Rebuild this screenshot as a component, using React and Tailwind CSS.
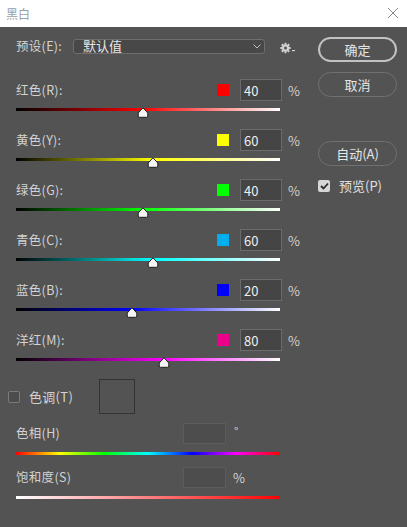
import React from "react";

const rows = [
  { label: "红色(R):", swatch: "bg-[#ff0000]", value: 40, grad: "bg-[linear-gradient(to_right,#000,#ff0000_48%,#fff)]" },
  { label: "黄色(Y):", swatch: "bg-[#ffff00]", value: 60, grad: "bg-[linear-gradient(to_right,#000,#ffff00_52%,#fff)]" },
  { label: "绿色(G):", swatch: "bg-[#00ff00]", value: 40, grad: "bg-[linear-gradient(to_right,#000,#00ff00_48%,#fff)]" },
  { label: "青色(C):", swatch: "bg-[#00aeef]", value: 60, grad: "bg-[linear-gradient(to_right,#000,#00ffff_52%,#fff)]" },
  { label: "蓝色(B):", swatch: "bg-[#0000ff]", value: 20, grad: "bg-[linear-gradient(to_right,#000,#0000ff_44%,#fff)]" },
  { label: "洋红(M):", swatch: "bg-[#ec008c]", value: 80, grad: "bg-[linear-gradient(to_right,#000,#ff00ff_56%,#fff)]" },
];

function Thumb({ left }) {
  return (
    <svg
      className="absolute top-[-1px]"
      style={{ left: left - 6 }}
      width="12"
      height="11"
      viewBox="0 0 12 11"
    >
      <path
        d="M6 0.8 L10.8 6 L10.8 9 Q10.8 10.3 9.5 10.3 L2.5 10.3 Q1.2 10.3 1.2 9 L1.2 6 Z"
        fill="#f4f4f4"
        stroke="#1e1e1e"
        strokeWidth="1"
      />
    </svg>
  );
}

function SliderRow({ label, swatch, value, grad }) {
  const pos = Math.round(((value + 200) / 500) * 264);
  return (
    <div className="h-[50px]">
      <div className="flex h-[22px] items-center">
        <span className="w-[201px] text-[12.5px] leading-none tracking-[0.3px]">{label}</span>
        <span className={`h-3 w-3 ${swatch}`} />
        <div className="ml-[11px] flex h-[22px] w-[42px] items-center border border-[#6b6b6b] bg-[#454545] pl-[3px] text-[13px] leading-none text-[#eeeeee]">
          {value}
        </div>
        <span className="ml-[6px] text-[13px] leading-none">%</span>
      </div>
      <div className={`relative mt-[7px] h-[3px] w-[264px] ${grad}`}>
        <Thumb left={pos} />
      </div>
    </div>
  );
}

function Gear() {
  return (
    <svg width="16" height="12" viewBox="0 0 16 12">
      <g fill="#d0d0d0">
        <circle cx="5.5" cy="6" r="3.6" />
        <rect x="4.5" y="0.8" width="2" height="10.4" />
        <rect x="0.3" y="5" width="10.4" height="2" />
        <rect x="4.5" y="0.8" width="2" height="10.4" transform="rotate(45 5.5 6)" />
        <rect x="4.5" y="0.8" width="2" height="10.4" transform="rotate(-45 5.5 6)" />
      </g>
      <circle cx="5.5" cy="6" r="1.5" fill="#535353" />
      <rect x="12" y="8" width="3" height="1.2" fill="#d0d0d0" />
    </svg>
  );
}

export default function App() {
  return (
    <div className="h-[527px] w-[407px] overflow-hidden bg-[#535353] font-[family-name:'Noto_Sans_CJK_SC',sans-serif] text-[#d2d2d2]">
      {/* Title bar */}
      <div className="flex h-[27px] items-center justify-between bg-white pl-[6px] pr-[8px]">
        <span className="text-[12px] leading-none text-[#9aa0a8]">黑白</span>
        <svg width="12" height="12" viewBox="0 0 12 12" className="mt-[-2px]">
          <path d="M1 1 L11 11 M11 1 L1 11" stroke="#8a8a8a" strokeWidth="1" />
        </svg>
      </div>

      <div className="flex pl-4">
        {/* Left column */}
        <div className="w-[286px]">
          {/* Preset row */}
          <div className="mt-[12px] flex h-[15px] items-center">
            <span className="w-[57px] text-[12.5px] leading-none tracking-[0.3px]">预设(E):</span>
            <div className="relative flex h-[15px] w-[192px] items-center rounded-[3px] border border-[#6e6e6e] bg-[#484848] pl-[9px]">
              <span className="mt-[-2px] text-[13px] leading-none text-[#e6e6e6]">默认值</span>
              <svg className="absolute right-[3px] top-[4px]" width="8" height="5" viewBox="0 0 8 5">
                <path d="M0.5 0.5 L4 4 L7.5 0.5" fill="none" stroke="#bdbdbd" strokeWidth="1" />
              </svg>
            </div>
            <div className="ml-[15px] mt-[3px]">
              <Gear />
            </div>
          </div>

          <div className="mt-[25px]">
            {rows.map((r) => (
              <SliderRow key={r.label} {...r} />
            ))}
          </div>

          {/* Tint */}
          <div className="-ml-2 flex h-[35px] items-center">
            <span className="h-3 w-3 rounded-[2px] border border-[#7a7a7a] bg-[#4c4c4c]" />
            <span className="ml-[9px] text-[13px] leading-none tracking-[0.3px]">色调(T)</span>
            <span className="ml-[26px] h-[35px] w-[36px] border border-[#333333]" />
          </div>

          <div className="mt-[9px]">
            <div className="flex h-[21px] items-center">
              <span className="w-[167px] text-[12.5px] leading-none tracking-[0.3px]">色相(H)</span>
              <span className="h-[21px] w-[43px] border border-[#5c5c5c] bg-[#4d4d4d]" />
              <span className="ml-[8px] mt-[-6px] text-[12px] leading-none">°</span>
            </div>
            <div className="mt-[8px] h-[3px] w-[264px] bg-[linear-gradient(to_right,#ff0000,#ffff00,#00ff00,#00ffff,#0000ff,#ff00ff,#ff0000)]" />
          </div>

          <div className="mt-[12px]">
            <div className="flex h-[21px] items-center">
              <span className="w-[167px] text-[12.5px] leading-none tracking-[0.3px]">饱和度(S)</span>
              <span className="h-[21px] w-[43px] border border-[#5c5c5c] bg-[#4d4d4d]" />
              <span className="ml-[7px] text-[13px] leading-none">%</span>
            </div>
            <div className="mt-[8px] h-[3px] w-[264px] bg-[linear-gradient(to_right,#ffffff,#ff0000)]" />
          </div>
        </div>

        {/* Right column */}
        <div className="ml-[16px] flex w-[79px] flex-col pt-[10px]">
          <button className="flex h-[25px] w-[79px] items-center justify-center rounded-full border-2 border-[#c2c2c2] text-[13px] leading-none text-[#e6e6e6]">
            确定
          </button>
          <button className="mt-[10px] flex h-[25px] w-[79px] items-center justify-center rounded-full border border-[#707070] text-[13px] leading-none text-[#e6e6e6]">
            取消
          </button>
          <button className="mt-[44px] flex h-[25px] w-[79px] items-center justify-center rounded-full border border-[#707070] text-[13px] leading-none text-[#e6e6e6]">
            自动(A)
          </button>
          <div className="mt-[13px] flex items-center">
            <span className="flex h-3 w-3 items-center justify-center rounded-[2px] bg-[#d6d6d6]">
              <svg width="9" height="8" viewBox="0 0 9 8">
                <path d="M1 4 L3.5 6.5 L8 1.5" fill="none" stroke="#2a2a2a" strokeWidth="1.8" />
              </svg>
            </span>
            <span className="ml-[9px] text-[13px] leading-none text-[#e0e0e0]">预览(P)</span>
          </div>
        </div>
      </div>
    </div>
  );
}
